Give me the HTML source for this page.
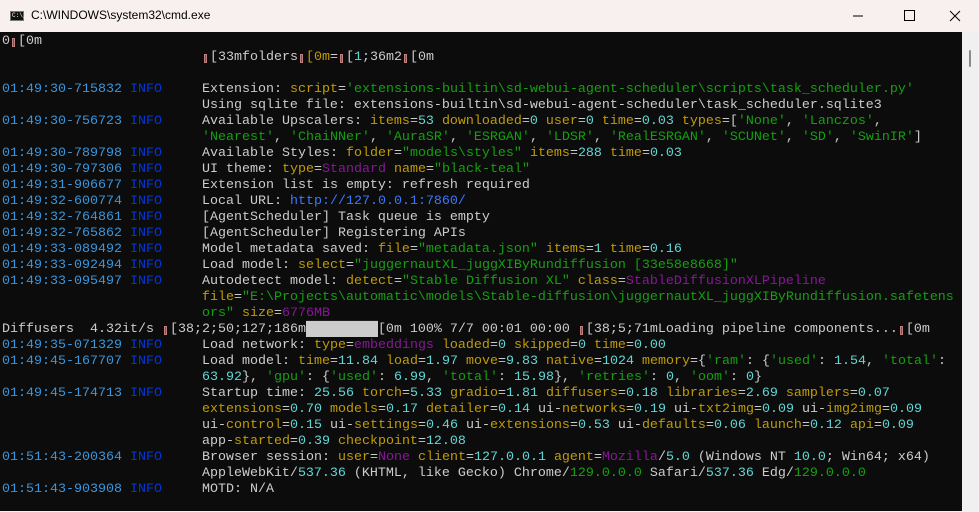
<!DOCTYPE html>
<html><head><meta charset="utf-8"><style>
html,body{margin:0;padding:0;width:979px;height:512px;overflow:hidden;background:#f6efee;}
#tb{position:absolute;left:0;top:0;width:979px;height:32px;background:#f7f0ef;}
#tt{position:absolute;left:31px;top:8px;font:12px "Liberation Sans",sans-serif;color:#000;}
#ico{position:absolute;left:10px;top:11px;width:14px;height:10px;background:#111;border:1px solid #777;box-sizing:border-box;font:6px "Liberation Mono",monospace;color:#fff;line-height:8px;padding-left:1px;}
#term{position:absolute;left:0;top:32px;width:962px;height:479px;background:#0c0c0c;}
#sb{position:absolute;left:962px;top:32px;width:17px;height:479px;background:#f0f0f0;}
#thumb{position:absolute;left:969px;top:50px;width:2px;height:17px;background:#8a8a8a;border-radius:1px;}
pre{margin:0;position:absolute;left:2px;top:34px;font:13.33px/16px "Liberation Mono",monospace;color:#cccccc;white-space:pre;}
.t{color:#3a96dd}.i{color:#0037da}.y{color:#c19c00}.g{color:#13a10e}.c{color:#61d6d6}.m{color:#881798}.u{color:#3b78ff}
.x{display:inline-block;width:8px;height:16px;vertical-align:top;position:relative}
.x:after{content:"";position:absolute;left:2px;top:4px;width:3px;height:9px;border:1px solid #c08080;background:#805050;box-sizing:border-box}
.bar{background:#cccccc;color:#cccccc}
</style></head><body>
<div id="tb"><div id="ico">C:\_</div><div id="tt">C:\WINDOWS\system32\cmd.exe</div>
<svg style="position:absolute;left:850px;top:8px" width="120" height="16"><line x1="3" y1="8" x2="13" y2="8" stroke="#000" stroke-width="1"/><rect x="54.5" y="2.5" width="10" height="10" fill="none" stroke="#000"/><path d="M100 3 L110 13 M110 3 L100 13" stroke="#000" stroke-width="1"/></svg></div>
<div id="term"></div><div id="sb"></div><div id="thumb"></div>
<pre>0<span class="x"></span>[0m
                         <span class="x"></span>[33mfolders<span class="x"></span><span class="y">[0m</span>=<span class="x"></span>[<span class="c">1</span>;36m2<span class="x"></span>[0m

<span class="t">01:49:30-715832</span> <span class="i">INFO</span>     Extension: <span class="y">script</span>=<span class="g">'extensions-builtin\sd-webui-agent-scheduler\scripts\task_scheduler.py'</span>
                         Using sqlite file: extensions-builtin\sd-webui-agent-scheduler\task_scheduler.sqlite3
<span class="t">01:49:30-756723</span> <span class="i">INFO</span>     Available Upscalers: <span class="y">items</span>=<span class="c">53</span> <span class="y">downloaded</span>=<span class="c">0</span> <span class="y">user</span>=<span class="c">0</span> <span class="y">time</span>=<span class="c">0.03</span> <span class="y">types</span>=[<span class="g">'None'</span>, <span class="g">'Lanczos'</span>,
                         <span class="g">'Nearest'</span>, <span class="g">'ChaiNNer'</span>, <span class="g">'AuraSR'</span>, <span class="g">'ESRGAN'</span>, <span class="g">'LDSR'</span>, <span class="g">'RealESRGAN'</span>, <span class="g">'SCUNet'</span>, <span class="g">'SD'</span>, <span class="g">'SwinIR'</span>]
<span class="t">01:49:30-789798</span> <span class="i">INFO</span>     Available Styles: <span class="y">folder</span>=<span class="g">"models\styles"</span> <span class="y">items</span>=<span class="c">288</span> <span class="y">time</span>=<span class="c">0.03</span>
<span class="t">01:49:30-797306</span> <span class="i">INFO</span>     UI theme: <span class="y">type</span>=<span class="m">Standard</span> <span class="y">name</span>=<span class="g">"black-teal"</span>
<span class="t">01:49:31-906677</span> <span class="i">INFO</span>     Extension list is empty: refresh required
<span class="t">01:49:32-600774</span> <span class="i">INFO</span>     Local URL: <span class="u">http://127.0.0.1:7860/</span>
<span class="t">01:49:32-764861</span> <span class="i">INFO</span>     [AgentScheduler] Task queue is empty
<span class="t">01:49:32-765862</span> <span class="i">INFO</span>     [AgentScheduler] Registering APIs
<span class="t">01:49:33-089492</span> <span class="i">INFO</span>     Model metadata saved: <span class="y">file</span>=<span class="g">"metadata.json"</span> <span class="y">items</span>=<span class="c">1</span> <span class="y">time</span>=<span class="c">0.16</span>
<span class="t">01:49:33-092494</span> <span class="i">INFO</span>     Load model: <span class="y">select</span>=<span class="g">"juggernautXL_juggXIByRundiffusion [33e58e8668]"</span>
<span class="t">01:49:33-095497</span> <span class="i">INFO</span>     Autodetect model: <span class="y">detect</span>=<span class="g">"Stable Diffusion XL"</span> <span class="y">class</span>=<span class="m">StableDiffusionXLPipeline</span>
                         <span class="y">file</span>=<span class="g">"E:\Projects\automatic\models\Stable-diffusion\juggernautXL_juggXIByRundiffusion.safetens</span>
                         <span class="g">ors"</span> <span class="y">size</span>=<span class="m">6776MB</span>
Diffusers  4.32it/s <span class="x"></span>[38;2;50;127;186m<span class="bar">█████████</span>[0m 100% 7/7 00:01 00:00 <span class="x"></span>[38;5;71mLoading pipeline components...<span class="x"></span>[0m
<span class="t">01:49:35-071329</span> <span class="i">INFO</span>     Load network: <span class="y">type</span>=<span class="m">embeddings</span> <span class="y">loaded</span>=<span class="c">0</span> <span class="y">skipped</span>=<span class="c">0</span> <span class="y">time</span>=<span class="c">0.00</span>
<span class="t">01:49:45-167707</span> <span class="i">INFO</span>     Load model: <span class="y">time</span>=<span class="c">11.84</span> <span class="y">load</span>=<span class="c">1.97</span> <span class="y">move</span>=<span class="c">9.83</span> <span class="y">native</span>=<span class="c">1024</span> <span class="y">memory</span>={<span class="g">'ram'</span>: {<span class="g">'used'</span>: <span class="c">1.54</span>, <span class="g">'total'</span>:
                         <span class="c">63.92</span>}, <span class="g">'gpu'</span>: {<span class="g">'used'</span>: <span class="c">6.99</span>, <span class="g">'total'</span>: <span class="c">15.98</span>}, <span class="g">'retries'</span>: <span class="c">0</span>, <span class="g">'oom'</span>: <span class="c">0</span>}
<span class="t">01:49:45-174713</span> <span class="i">INFO</span>     Startup time: <span class="c">25.56</span> <span class="y">torch</span>=<span class="c">5.33</span> <span class="y">gradio</span>=<span class="c">1.81</span> <span class="y">diffusers</span>=<span class="c">0.18</span> <span class="y">libraries</span>=<span class="c">2.69</span> <span class="y">samplers</span>=<span class="c">0.07</span>
                         <span class="y">extensions</span>=<span class="c">0.70</span> <span class="y">models</span>=<span class="c">0.17</span> <span class="y">detailer</span>=<span class="c">0.14</span> ui-<span class="y">networks</span>=<span class="c">0.19</span> ui-<span class="y">txt2img</span>=<span class="c">0.09</span> ui-<span class="y">img2img</span>=<span class="c">0.09</span>
                         ui-<span class="y">control</span>=<span class="c">0.15</span> ui-<span class="y">settings</span>=<span class="c">0.46</span> ui-<span class="y">extensions</span>=<span class="c">0.53</span> ui-<span class="y">defaults</span>=<span class="c">0.06</span> <span class="y">launch</span>=<span class="c">0.12</span> <span class="y">api</span>=<span class="c">0.09</span>
                         app-<span class="y">started</span>=<span class="c">0.39</span> <span class="y">checkpoint</span>=<span class="c">12.08</span>
<span class="t">01:51:43-200364</span> <span class="i">INFO</span>     Browser session: <span class="y">user</span>=<span class="m">None</span> <span class="y">client</span>=<span class="c">127.0.0.1</span> <span class="y">agent</span>=<span class="m">Mozilla</span>/<span class="c">5.0</span> (Windows NT <span class="c">10.0</span>; Win64; x64)
                         AppleWebKit/<span class="c">537.36</span> (KHTML, like Gecko) Chrome/<span class="g">129.0.0.0</span> Safari/<span class="c">537.36</span> Edg/<span class="g">129.0.0.0</span>
<span class="t">01:51:43-903908</span> <span class="i">INFO</span>     MOTD: N/A
</pre>
</body></html>
